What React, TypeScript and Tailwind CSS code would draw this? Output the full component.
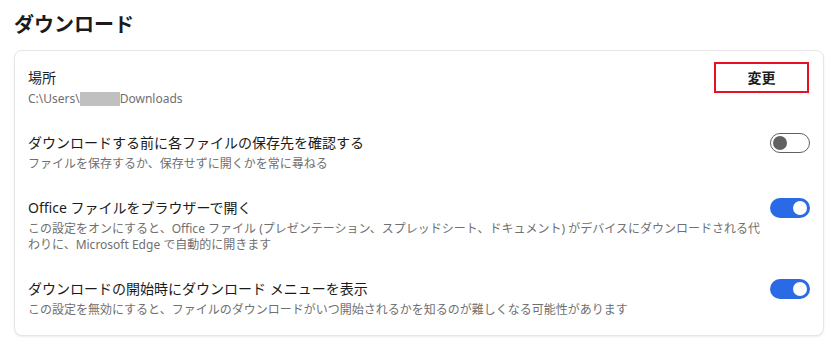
import React from "react";

const font = { fontFamily: '"Segoe UI", "Noto Sans", "Noto Sans CJK JP", sans-serif' };

const Toggle = ({ on }: { on: boolean }) =>
  on ? (
    <div className="flex h-5 w-10 shrink-0 items-center justify-end rounded-full bg-[#2a6ae6] px-[3px]">
      <div className="h-[14px] w-[14px] rounded-full bg-white" />
    </div>
  ) : (
    <div className="flex h-5 w-10 shrink-0 items-center justify-start rounded-full border border-[#616161] bg-white px-[2px]">
      <div className="h-[14px] w-[14px] rounded-full bg-[#616161]" />
    </div>
  );

interface RowProps {
  title: string;
  desc: React.ReactNode;
  right: React.ReactNode;
}

const Row = ({ title, desc, right }: RowProps) => (
  <div className="flex items-start gap-[6px] py-[13px]">
    <div className="flex-1">
      <div className="text-sm leading-5 text-[#1b1b1b]">{title}</div>
      <div className="mt-[3px] text-xs leading-4 text-[#707070]">{desc}</div>
    </div>
    {right}
  </div>
);

export default function App() {
  return (
    <div className="min-h-[345px] w-[834px] bg-white pl-[14px] pr-[10px] pt-[11px]" style={font}>
      <h1 className="mb-[11px] text-xl font-bold leading-7 text-[#1b1b1b]">ダウンロード</h1>
      <div className="rounded-lg border border-[#e6e6e6] bg-white px-[13px] py-[4px] shadow-[0_1px_2px_rgba(0,0,0,0.08)]">
        <Row
          title="場所"
          desc={
            <span className="flex items-center">
              C:\Users\
              <span className="inline-block h-[14px] w-[40px] bg-[#c0c0c0]" />
              Downloads
            </span>
          }
          right={
            <button className="-mt-[6px] mr-px flex h-[31px] w-[95px] items-center justify-center border-2 border-[#e81123] bg-white text-sm font-bold text-[#1b1b1b]">
              変更
            </button>
          }
        />
        <Row
          title="ダウンロードする前に各ファイルの保存先を確認する"
          desc="ファイルを保存するか、保存せずに開くかを常に尋ねる"
          right={<Toggle on={false} />}
        />
        <Row
          title="Office ファイルをブラウザーで開く"
          desc="この設定をオンにすると、Office ファイル (プレゼンテーション、スプレッドシート、ドキュメント) がデバイスにダウンロードされる代わりに、Microsoft Edge で自動的に開きます"
          right={<Toggle on />}
        />
        <Row
          title="ダウンロードの開始時にダウンロード メニューを表示"
          desc="この設定を無効にすると、ファイルのダウンロードがいつ開始されるかを知るのが難しくなる可能性があります"
          right={<Toggle on />}
        />
      </div>
    </div>
  );
}
